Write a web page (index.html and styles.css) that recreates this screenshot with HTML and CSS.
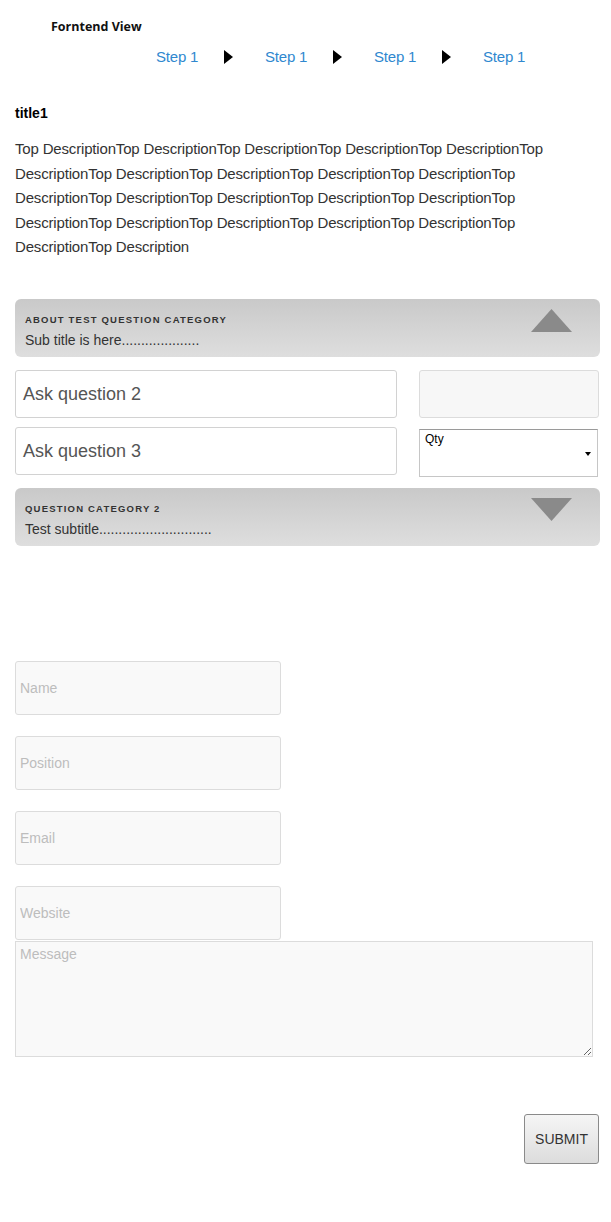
FILE: index.html
```html
<!DOCTYPE html>
<html>
<head>
<meta charset="utf-8">
<link rel="stylesheet" href="styles.css">
</head>
<body>
<div class="page">
  <div class="header">Forntend View</div>
  <nav class="steps">
    <a class="step">Step 1</a><span class="arrow"></span>
    <a class="step">Step 1</a><span class="arrow"></span>
    <a class="step">Step 1</a><span class="arrow"></span>
    <a class="step">Step 1</a>
  </nav>
  <h1 class="title">title1</h1>
  <p class="desc">Top DescriptionTop DescriptionTop DescriptionTop DescriptionTop DescriptionTop DescriptionTop DescriptionTop DescriptionTop DescriptionTop DescriptionTop DescriptionTop DescriptionTop DescriptionTop DescriptionTop DescriptionTop DescriptionTop DescriptionTop DescriptionTop DescriptionTop DescriptionTop DescriptionTop Description</p>

  <div class="acc">
    <div class="acc-text">
      <div class="acc-title">About Test Question Category</div>
      <div class="acc-sub">Sub title is here....................</div>
    </div>
    <svg class="acc-icon" width="41" height="23" viewBox="0 0 41 23"><polygon points="20.5,0 41,23 0,23" fill="#8a8a8a"/></svg>
  </div>

  <div class="qrow">
    <div class="qbox">Ask question 2</div>
    <div class="qside"></div>
  </div>
  <div class="qrow qrow2">
    <div class="qbox">Ask question 3</div>
    <div class="qselect"><span>Qty</span><span class="caret"></span></div>
  </div>

  <div class="acc acc2">
    <div class="acc-text">
      <div class="acc-title">Question Category 2</div>
      <div class="acc-sub">Test subtitle.............................</div>
    </div>
    <svg class="acc-icon" width="41" height="23" viewBox="0 0 41 23"><polygon points="0,0 41,0 20.5,23" fill="#8a8a8a"/></svg>
  </div>

  <form class="contact">
    <input class="field" type="text" placeholder="Name">
    <input class="field" type="text" placeholder="Position">
    <input class="field" type="text" placeholder="Email">
    <input class="field" type="text" placeholder="Website">
    <textarea class="message" placeholder="Message"></textarea>
    <div class="actions"><button type="button" class="submit">SUBMIT</button></div>
  </form>
</div>
</body>
</html>
```

FILE: styles.css
```css
* { box-sizing: border-box; }
body {
  margin: 0;
  background: #fff;
  font-family: "Liberation Sans", Arial, sans-serif;
  color: #333;
}
.page {
  width: 611px;
  padding: 0 11px 0 15px;
}
.header {
  padding-top: 18px;
  padding-left: 36px;
  font-family: "Open Sans", "DejaVu Sans", sans-serif;
  font-weight: 700;
  font-size: 12.5px;
  line-height: 18px;
  color: #111;
}
.steps {
  display: flex;
  align-items: center;
  margin-top: 12px;
  padding-left: 141px;
  height: 18px;
}
.step {
  font-size: 15px;
  line-height: 18px;
  color: #2f88cf;
  margin-right: 26px;
  width: 42px;
  white-space: nowrap;
  letter-spacing: -0.2px;
}
.arrow {
  width: 0;
  height: 0;
  border-top: 7px solid transparent;
  border-bottom: 7px solid transparent;
  border-left: 9px solid #000;
  margin-right: 32px;
}
.title {
  margin: 38px 0 0;
  font-size: 14px;
  line-height: 18px;
  font-weight: 700;
  color: #000;
}
.desc {
  margin: 15px 0 0;
  width: 585px;
  font-size: 15px;
  line-height: 24.5px;
  letter-spacing: -0.17px;
  color: #333;
}
.acc {
  margin-top: 39px;
  width: 585px;
  height: 58px;
  border-radius: 6px;
  background: linear-gradient(to bottom, #c9c9c9, #dedede);
  display: flex;
  justify-content: space-between;
  align-items: flex-start;
  padding: 15px 28px 0 10px;
}
.acc-title {
  font-size: 9.5px;
  line-height: 12px;
  font-weight: 700;
  text-transform: uppercase;
  letter-spacing: 1.2px;
  color: #333;
}
.acc-sub {
  margin-top: 6px;
  font-size: 14px;
  line-height: 16px;
  color: #333;
}
.acc-icon {
  margin-top: -5px;
  display: block;
}
.acc2 { margin-top: 13px; }
.qrow {
  display: flex;
  margin-top: 13px;
  width: 585px;
  height: 48px;
  justify-content: space-between;
  align-items: flex-start;
}
.qrow2 { margin-top: 9px; }
.qbox {
  width: 382px;
  height: 48px;
  border: 1px solid #d2d2d2;
  border-radius: 3px;
  background: #fff;
  padding-left: 7px;
  font-size: 18px;
  line-height: 46px;
  color: #555;
}
.qside {
  width: 180px;
  height: 48px;
  border: 1px solid #dcdcdc;
  border-radius: 3px;
  background: #f7f7f7;
  margin-right: 1px;
}
.qselect {
  width: 179px;
  height: 48px;
  margin-top: 2px;
  margin-right: 2px;
  border: 1px solid #c6c6c6;
  border-top-color: #9a9a9a;
  background: #fff;
  position: relative;
  padding: 2px 0 0 5px;
  font-size: 12px;
  line-height: 15px;
  color: #000;
  flex-shrink: 0;
}
.caret {
  position: absolute;
  right: 6px;
  top: 22px;
  width: 0;
  height: 0;
  border-left: 3.5px solid transparent;
  border-right: 3.5px solid transparent;
  border-top: 4px solid #000;
}
.contact {
  margin: 115px 0 0;
  display: flex;
  flex-direction: column;
  align-items: flex-start;
}
.field {
  display: block;
  width: 266px;
  height: 54px;
  margin: 0 0 21px;
  border: 1px solid #dcdcdc;
  border-radius: 3px;
  background: #f9f9f9;
  padding: 0 4px;
  font-family: "Liberation Sans", Arial, sans-serif;
  font-size: 14px;
  color: #333;
  outline: none;
}
.field:last-of-type { margin-bottom: 1px; }
.field::placeholder { color: #bdbdbd; }
.message {
  display: block;
  width: 578px;
  height: 116px;
  margin: 0;
  border: 1px solid #dcdcdc;
  border-radius: 0;
  background: #f9f9f9;
  padding: 3px 4px;
  font-family: "Liberation Sans", Arial, sans-serif;
  font-size: 14px;
  line-height: 18px;
  color: #333;
  resize: both;
  outline: none;
}
.message::placeholder { color: #bdbdbd; }
.actions {
  width: 585px;
  display: flex;
  justify-content: flex-end;
  margin-top: 57px;
}
.submit {
  width: 75px;
  height: 50px;
  border: 1px solid #8a8a8a;
  border-radius: 3px;
  background: linear-gradient(to bottom, #f5f5f5 0%, #e9e9e9 50%, #dcdcdc 100%);
  font-family: "Liberation Sans", Arial, sans-serif;
  font-size: 14px;
  color: #333;
  padding: 0;
  margin-right: 1px;
}
```
